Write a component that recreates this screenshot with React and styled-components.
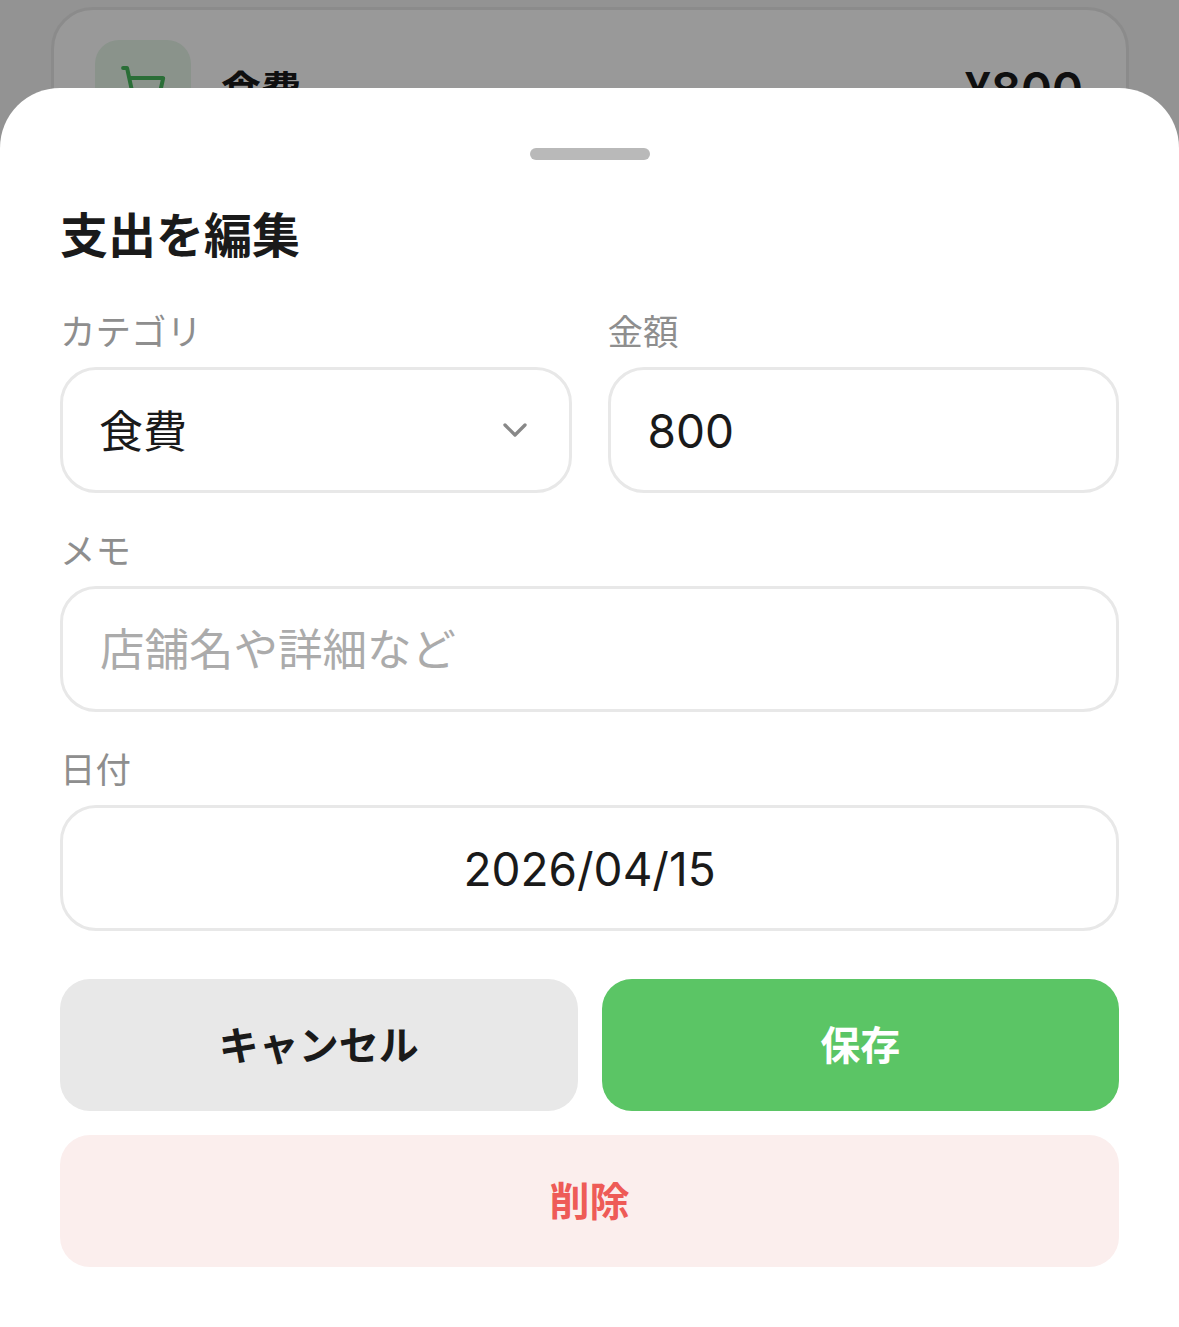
import { useState } from "react";
import styled, { createGlobalStyle } from "styled-components";
import { ShoppingCart, ChevronDown } from "lucide-react";

const FONT = `Inter, "Noto Sans CJK JP", sans-serif`;

const GlobalStyle = createGlobalStyle`
  * { box-sizing: border-box; }
  html, body { margin: 0; padding: 0; height: 100%; background: #f5f5f5; }
  body { font-family: ${FONT}; overflow: hidden; }
  input, select, button { font-family: inherit; }
`;

const Page = styled.div`
  height: 1327px;
  padding: 7px 50px 0 51px;
  background: #f5f5f5;
`;

const ExpenseCard = styled.div`
  display: flex;
  align-items: center;
  gap: 30px;
  height: 162px;
  padding: 30px 43px 30px 41px;
  background: #fff;
  border: 3px solid #e8e8e8;
  border-radius: 42px;
`;

const IconTile = styled.div`
  display: flex;
  align-items: center;
  justify-content: center;
  width: 96px;
  height: 96px;
  border-radius: 24px;
  color: #46b85c;
  background: #e6f6e8;
`;

const CardName = styled.span`
  flex: 1;
  font-size: 40px;
  font-weight: 700;
  color: #1a1a1a;
`;

const CardAmount = styled.span`
  font-size: 47px;
  font-weight: 600;
  color: #1a1a1a;
`;

const Overlay = styled.div`
  position: fixed;
  inset: 0;
  display: flex;
  flex-direction: column;
  justify-content: flex-end;
  background: rgba(0, 0, 0, 0.4);
`;

const Sheet = styled.div`
  height: 1239px;
  padding: 60px 60px 0;
  background: #fff;
  border-radius: 60px 60px 0 0;
`;

const Handle = styled.div`
  width: 120px;
  height: 12px;
  margin: 0 auto 47px;
  border-radius: 6px;
  background: #b9b9b9;
`;

const Title = styled.h2`
  margin: 0 0 46px;
  font-size: 48px;
  line-height: 58px;
  font-weight: 700;
  color: #1a1a1a;
`;

const Row = styled.div`
  display: grid;
  grid-template-columns: ${(p) => (p.$cols === 2 ? "1fr 1fr" : "1fr")};
  gap: 36px;
  margin-bottom: ${(p) => p.$after || 37}px;
`;

const Field = styled.label`
  display: flex;
  flex-direction: column;
  min-width: 0;
`;

const Label = styled.span`
  height: 44px;
  margin-bottom: 12px;
  font-size: 35.5px;
  line-height: 44px;
  color: #8e8e8e;
`;

const Input = styled.input`
  width: 100%;
  height: 126px;
  padding: 2px 37px 0;
  border: 3px solid #e8e8e8;
  border-radius: 36px;
  outline: none;
  background: #fff;
  font-size: ${(p) => p.$size || 44}px;
  color: #1a1a1a;
  text-align: ${(p) => p.$align || "left"};

  &::placeholder {
    color: #ababab;
    opacity: 1;
  }
`;

const SelectWrap = styled.div`
  position: relative;
`;

const Select = styled(Input).attrs({ as: "select" })`
  appearance: none;
  padding: 4px 36px 0;
`;

const Chevron = styled(ChevronDown)`
  position: absolute;
  top: 43px;
  right: 37px;
  color: #888;
  pointer-events: none;
`;

const Buttons = styled.div`
  display: grid;
  grid-template-columns: 1fr 1fr;
  gap: 24px;
`;

const Button = styled.button`
  grid-column: ${(p) => (p.$wide ? "1 / -1" : "auto")};
  height: 132px;
  padding: 0 0 4px;
  border: 0;
  border-radius: 30px;
  background: ${(p) => p.$bg};
  color: ${(p) => p.$fg};
  font-size: 40px;
  font-weight: ${(p) => p.$weight || 600};
`;

export default function App() {
  const [category, setCategory] = useState("食費");
  const [amount, setAmount] = useState("800");
  const [memo, setMemo] = useState("");
  const [date, setDate] = useState("2026/04/15");

  return (
    <>
      <GlobalStyle />
      <Page>
        <ExpenseCard>
          <IconTile>
            <ShoppingCart size={48} />
          </IconTile>
          <CardName>食費</CardName>
          <CardAmount>¥800</CardAmount>
        </ExpenseCard>
      </Page>
      <Overlay>
        <Sheet>
          <Handle />
          <Title>支出を編集</Title>
          <Row $cols={2}>
            <Field>
              <Label>カテゴリ</Label>
              <SelectWrap>
                <Select value={category} onChange={(e) => setCategory(e.target.value)}>
                  <option>食費</option>
                  <option>交通費</option>
                </Select>
                <Chevron size={40} />
              </SelectWrap>
            </Field>
            <Field>
              <Label>金額</Label>
              <Input $size={46} value={amount} onChange={(e) => setAmount(e.target.value)} />
            </Field>
          </Row>
          <Row>
            <Field>
              <Label>メモ</Label>
              <Input $size={44.5} placeholder="店舗名や詳細など" value={memo} onChange={(e) => setMemo(e.target.value)} />
            </Field>
          </Row>
          <Row $after={48}>
            <Field>
              <Label>日付</Label>
              <Input $size={46} $align="center" value={date} onChange={(e) => setDate(e.target.value)} />
            </Field>
          </Row>
          <Buttons>
            <Button $bg="#e8e8e8" $fg="#1a1a1a" $weight={700}>キャンセル</Button>
            <Button $bg="#5bc565" $fg="#fff">保存</Button>
            <Button $wide $bg="#fbeeed" $fg="#ee5b57">削除</Button>
          </Buttons>
        </Sheet>
      </Overlay>
    </>
  );
}
